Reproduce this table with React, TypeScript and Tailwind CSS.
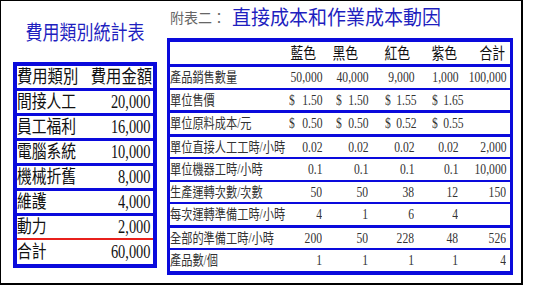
const serif = "font-['Liberation_Serif','Noto_Sans_CJK_TC',serif]"

type Money = { cur: string }
type Val = string | Money

const costRows = [
  ['間接人工', '20,000'],
  ['員工福利', '16,000'],
  ['電腦系統', '10,000'],
  ['機械折舊', '8,000'],
  ['維護', '4,000'],
  ['動力', '2,000'],
]

const colors = ['藍色', '黑色', '紅色', '紫色', '合計']
const headPad = ['pr-[10px]', 'pr-[14px]', 'pr-[8px]', 'pr-[5px]', 'pr-[5px]']
const curPad = ['pl-[6px]', 'pl-[10px]', 'pl-[13px]', 'pl-[14px]', 'pl-[6px]']

// heights include the top separator (border-box)
const driverRows: { label: string; sep: string; vals: Val[] }[] = [
  { label: '產品銷售數量', sep: 'h-[23.5px] border-t-[3px]', vals: ['50,000', '40,000', '9,000', '1,000', '100,000'] },
  { label: '單位售價', sep: 'h-[22.5px] border-t-2', vals: [{ cur: '1.50' }, { cur: '1.50' }, { cur: '1.55' }, { cur: '1.65' }, ''] },
  { label: '單位原料成本/元', sep: 'h-[23.5px] border-t-[3px]', vals: [{ cur: '0.50' }, { cur: '0.50' }, { cur: '0.52' }, { cur: '0.55' }, ''] },
  { label: '單位直接人工工時/小時', sep: 'h-[23.5px] border-t-[3px]', vals: ['0.02', '0.02', '0.02', '0.02', '2,000'] },
  { label: '單位機器工時/小時', sep: 'h-[22.5px] border-t-2', vals: ['0.1', '0.1', '0.1', '0.1', '10,000'] },
  { label: '生產運轉次數/次數', sep: 'h-[22.5px] border-t-2', vals: ['50', '50', '38', '12', '150'] },
  { label: '每次運轉準備工時/小時', sep: 'h-[22.5px] border-t-2', vals: ['4', '1', '6', '4', ''] },
  { label: '全部的準備工時/小時', sep: 'h-[23.5px] border-t-[3px]', vals: ['200', '50', '228', '48', '526'] },
  { label: '產品數/個', sep: 'h-[22.5px] border-t-2', vals: ['1', '1', '1', '1', '4'] },
]

const CostTable = () => (
  <div className="w-[144px] border-4 border-[#0a0adc] bg-white text-[18px] text-[#111]">
    <div className="flex h-[22px] items-center">
      <div className="w-[68px] whitespace-nowrap">
        <span className="inline-block origin-left scale-x-[0.85]">費用類別</span>
      </div>
      <div className="flex min-w-0 flex-1 justify-end whitespace-nowrap pr-[1px]">
        <span className="inline-block origin-right scale-x-[0.85]">費用金額</span>
      </div>
    </div>
    {costRows.map(([name, amount]) => (
      <div key={name} className="flex h-[25px] items-center border-t-[3px] border-[#0a0adc]">
        <div className="w-[68px] whitespace-nowrap">
          <span className="inline-block origin-left scale-x-[0.82]">{name}</span>
        </div>
        <div className="flex min-w-0 flex-1 justify-end whitespace-nowrap pr-[3px]">
          <span className="inline-block origin-right scale-x-[0.8]">{amount}</span>
        </div>
      </div>
    ))}
    <div className="flex h-[26px] items-center border-t-2 border-[#e8201c]">
      <div className="w-[68px] whitespace-nowrap">
        <span className="inline-block origin-left scale-x-[0.82]">合計</span>
      </div>
      <div className="flex min-w-0 flex-1 justify-end whitespace-nowrap pr-[3px]">
        <span className="inline-block origin-right scale-x-[0.8]">60,000</span>
      </div>
    </div>
  </div>
)

const ValueCell = ({ val, i }: { val: Val; i: number }) => {
  if (typeof val === 'string') {
    return (
      <div className="flex items-center justify-end whitespace-nowrap pr-[4px]">
        <span className="inline-block origin-right scale-x-[0.83]">{val}</span>
      </div>
    )
  }
  return (
    <div className={`flex items-center justify-between whitespace-nowrap pr-[4px] ${curPad[i]}`}>
      <span className="inline-block origin-left scale-x-[0.83]">$</span>
      <span className="inline-block origin-right scale-x-[0.83]">{val.cur}</span>
    </div>
  )
}

const DriverTable = () => (
  <div className="w-[346px] border-x-[3px] border-y-4 border-[#0a0adc] bg-white text-[14px] text-[#333]">
    <div className="grid h-[22px] grid-cols-[113px_43px_46px_46px_44px_48px] text-[16px] text-[#111]">
      <div />
      {colors.map((c, i) => (
        <div key={c} className={`flex items-center justify-end whitespace-nowrap ${headPad[i]}`}>
          <span className="inline-block origin-right scale-x-[0.8]">{c}</span>
        </div>
      ))}
    </div>
    {driverRows.map((row) => (
      <div
        key={row.label}
        className={`grid grid-cols-[113px_43px_46px_46px_44px_48px] border-[#0a0adc] ${row.sep}`}
      >
        <div className="flex items-center whitespace-nowrap">
          <span className="inline-block origin-left scale-x-[0.8]">{row.label}</span>
        </div>
        {row.vals.map((v, i) => (
          <ValueCell key={i} val={v} i={i} />
        ))}
      </div>
    ))}
  </div>
)

export default function App() {
  return (
    <div className={`h-[305px] w-[534px] bg-white ${serif}`}>
      <div className="flex h-[285px] w-[523px] border-l border-t border-r-2 border-b-2 border-black">
        {/* left: cost categories */}
        <div className="ml-[12px] flex w-[144px] flex-col pt-[19px]">
          <div className="flex h-[26px] items-center justify-center whitespace-nowrap text-[20px] text-[#1f1fbf]">
            <span className="inline-block scale-x-[0.85]">費用類別統計表</span>
          </div>
          <div className="mt-[16px]">
            <CostTable />
          </div>
        </div>

        {/* right: direct cost & activity drivers */}
        <div className="ml-[10px] flex w-[346px] flex-col pt-[5px]">
          <div className="flex h-[24px] items-center whitespace-nowrap pl-[3px]">
            <span className="text-[14px] text-[#666]">附表二：</span>
            <span className="ml-[6px] inline-block origin-left scale-x-[0.95] text-[20px] text-[#1f1fbf]">
              直接成本和作業成本動因
            </span>
          </div>
          <div className="mt-[8px]">
            <DriverTable />
          </div>
        </div>
      </div>
    </div>
  )
}
